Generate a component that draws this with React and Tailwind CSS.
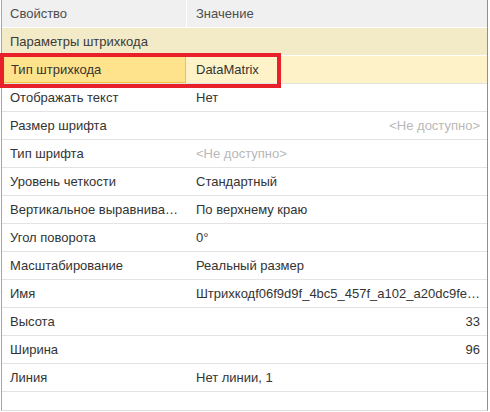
const ROWS = [
  { name: 'Отображать текст', value: 'Нет' },
  { name: 'Размер шрифта', value: '<Не доступно>', muted: true, right: true },
  { name: 'Тип шрифта', value: '<Не доступно>', muted: true },
  { name: 'Уровень четкости', value: 'Стандартный' },
  { name: 'Вертикальное выравнива…', value: 'По верхнему краю' },
  { name: 'Угол поворота', value: '0°' },
  { name: 'Масштабирование', value: 'Реальный размер' },
  { name: 'Имя', value: 'Штрихкодf06f9d9f_4bc5_457f_a102_a20dc9fe…' },
  { name: 'Высота', value: '33', right: true },
  { name: 'Ширина', value: '96', right: true },
  { name: 'Линия', value: 'Нет линии, 1' },
]

export default function App() {
  return (
    <div className="relative w-[490px] h-[412px] bg-white overflow-hidden font-['Liberation_Sans',Arial,sans-serif] text-[13px] text-[#333333]">
      <div className="ml-px w-[487px] h-[411px] border-l border-r border-b border-l-[#a6a6a6] border-r-[#8f8f8f] border-b-[#dedede] flex flex-col">
        {/* header */}
        <div className="flex h-[28px] bg-[#f0f0f0] border-b border-white text-[#4d4d4d]">
          <div className="w-[185px] border-r border-white pl-2 flex items-center">Свойство</div>
          <div className="flex-1 pl-[9px] flex items-center">Значение</div>
        </div>

        {/* group */}
        <div className="h-[28px] bg-[#f3ebc7] border-b border-white pl-2 flex items-center text-[#3a3a3a]">
          Параметры штрихкода
        </div>

        {/* selected row */}
        <div className="flex h-[28px] bg-[#fef3c8] border-b border-[#e3e3e3]">
          <div className="w-[184px] bg-[#ffe38c] border border-[#f4c23c] pl-[8px] flex items-center">
            Тип штрихкода
          </div>
          <div className="flex-1 pl-[10px] flex items-center">DataMatrix</div>
        </div>

        {ROWS.map((r) => (
          <div key={r.name} className="flex h-[28px] border-b border-[#e3e3e3]">
            <div className="w-[185px] pl-2 flex items-center whitespace-nowrap">
              {r.name}
            </div>
            <div
              className={`flex-1 pl-[9px] pr-[7px] flex items-center whitespace-nowrap ${
                r.right ? 'justify-end' : ''
              } ${r.muted ? 'text-[#b8b8b8]' : ''}`}
            >
              {r.value}
            </div>
          </div>
        ))}
      </div>

      {/* annotation frame */}
      <div className="absolute left-0 top-[53px] w-[281px] h-[35px] border-4 border-[#e8202a]" />
    </div>
  )
}
